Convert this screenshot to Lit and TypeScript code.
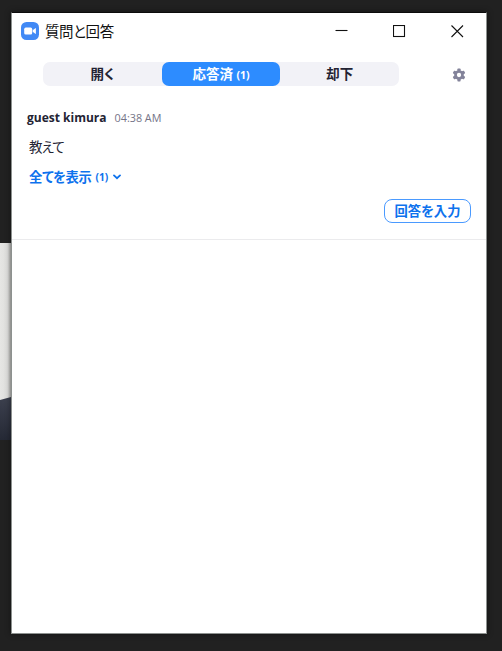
import { LitElement, html, svg, css, type TemplateResult } from 'lit';
import { customElement, property, state } from 'lit/decorators.js';

interface Tab {
  label: string;
  count?: number;
}

interface Question {
  author: string;
  time: string;
  text: string;
  answers: number;
}

const TABS: Tab[] = [
  { label: '開く' },
  { label: '応答済', count: 1 },
  { label: '却下' },
];

const QUESTIONS: Question[] = [
  { author: 'guest kimura', time: '04:38 AM', text: '教えて', answers: 1 },
];

@customElement('qa-titlebar')
export class QaTitlebar extends LitElement {
  @property({ type: String }) label = '';

  static styles = css`
    :host {
      display: flex;
      align-items: center;
      height: 36px;
      padding: 0 22px 0 9px;
    }

    .logo {
      width: 18px;
      height: 18px;
      margin-right: 6px;
    }

    .title {
      flex: 1;
      padding-top: 1px;
      color: #111;
      font-size: 14.5px;
      line-height: 20px;
      letter-spacing: -0.4px;
    }

    .controls {
      display: flex;
      gap: 45px;
    }

    svg {
      display: block;
    }
  `;

  render(): TemplateResult {
    return html`
      <svg class="logo" viewBox="0 0 18 18">
        <rect width="18" height="18" rx="5.5" fill="#4189f5" />
        <rect x="3.2" y="5.6" width="8" height="7" rx="1.6" fill="#fff" />
        <path d="M11.7 8.2l2.6-2q.6-.3.6.4v4.8q0 .7-.6.4l-2.6-2z" fill="#fff" />
      </svg>
      <span class="title">${this.label}</span>
      <div class="controls">
        ${this._renderControl(svg`<path d="M.5 5.5h12" />`)}
        ${this._renderControl(svg`<rect x=".5" y=".5" width="11" height="11" />`)}
        ${this._renderControl(svg`<path d="M.5.5l11.5 11.5M12 .5l-11.5 11.5" />`)}
      </div>
    `;
  }

  private _renderControl(shape: unknown): TemplateResult {
    return html`
      <svg width="13" height="13" viewBox="0 0 13 13" fill="none" stroke="#111" stroke-width="1.1">
        ${shape}
      </svg>
    `;
  }
}

@customElement('qa-tabs')
export class QaTabs extends LitElement {
  @property({ attribute: false }) tabs: Tab[] = [];
  @property({ type: Number }) selected = 0;

  static styles = css`
    :host {
      display: flex;
      width: 356px;
      height: 24px;
      border-radius: 7px;
      background: #f2f2f7;
    }

    button {
      flex: 1;
      padding: 0;
      border: none;
      border-radius: 7px;
      background: transparent;
      color: #232333;
      font: inherit;
      font-size: 13.5px;
      font-weight: 700;
      line-height: 22px;
      font-feature-settings: inherit;
    }

    button.active {
      background: #2d8cff;
      color: #fff;
    }

    small {
      font-size: 10.5px;
    }
  `;

  render(): TemplateResult {
    return html`
      ${this.tabs.map(
        (tab, i) => html`
          <button
            class=${i === this.selected ? 'active' : ''}
            @click=${() => this._select(i)}
          >${tab.label}${tab.count ? html` <small>(${tab.count})</small>` : ''}</button>
        `
      )}
    `;
  }

  private _select(index: number): void {
    this.dispatchEvent(new CustomEvent('select-tab', { detail: index }));
  }
}

@customElement('qa-question')
export class QaQuestion extends LitElement {
  @property({ attribute: false }) question!: Question;

  static styles = css`
    :host {
      display: flex;
      flex-direction: column;
      padding: 10px 15px 0;
      border-bottom: 1px solid #ebebed;
    }

    .meta {
      display: flex;
      align-items: center;
      gap: 8px;
      height: 20px;
      font-size: 12px;
      color: #232333;
    }

    .time {
      color: #747487;
      font-size: 10.8px;
    }

    .text {
      height: 20px;
      margin: 10px 0 0 2px;
      color: #232333;
      font-size: 13.5px;
      line-height: 20px;
      letter-spacing: -0.9px;
    }

    .more {
      display: flex;
      align-items: center;
      height: 20px;
      margin: 9px 0 0 2px;
      color: #0e72ed;
      font-size: 13.3px;
      font-weight: 700;
    }

    .more span {
      letter-spacing: -0.3px;
    }

    .more small {
      margin: 1px 5px 0 4px;
      font-size: 10.2px;
    }

    .more svg {
      margin-top: 2px;
    }

    .reply {
      align-self: flex-end;
      width: 87px;
      height: 24px;
      margin-top: 13px;
      padding: 0;
      border: 1px solid #4a9aff;
      border-radius: 8px;
      background: #fff;
      color: #0e72ed;
      font: inherit;
      font-size: 13.3px;
      font-weight: 700;
      line-height: 20px;
      font-feature-settings: inherit;
    }
  `;

  render(): TemplateResult {
    const { author, time, text, answers } = this.question;
    return html`
      <div class="meta"><b>${author}</b><span class="time">${time}</span></div>
      <div class="text">${text}</div>
      <div class="more">
        <span>全てを表示</span>
        <small>(${answers})</small>
        <svg width="8" height="6" viewBox="0 0 8 6" fill="none" stroke="currentColor" stroke-width="1.8">
          <path d="M1 1.4L4 4.2l3-2.8" stroke-linecap="round" />
        </svg>
      </div>
      <button class="reply">回答を入力</button>
    `;
  }
}

@customElement('app-root')
export class AppRoot extends LitElement {
  @state() private _tab = 1;

  static styles = css`
    :host {
      display: grid;
      grid-template-columns: 11px 476px 1fr;
      box-sizing: border-box;
      height: 651px;
      padding: 12px 0 17px;
      overflow: hidden;
      background: #212121;
      font-family: 'Open Sans', 'Noto Sans', 'Noto Sans CJK JP', sans-serif;
      font-feature-settings: 'palt';
    }

    /* Slice of the meeting video showing behind the window */
    .behind {
      display: block;
      width: 11px;
      height: 197px;
      margin-top: 231px;
    }

    .window {
      box-sizing: border-box;
      height: 622px;
      border: 1px solid #8d918f;
      border-top-color: #0c0c0c;
      background: #fff;
      box-shadow: 0 0 6px rgba(0, 0, 0, 0.45);
    }

    .toolbar {
      display: flex;
      align-items: center;
      justify-content: space-between;
      height: 24px;
      padding: 13px 20px 11px 31px;
    }

    .gear {
      margin-top: 2px;
    }

    qa-question {
      box-sizing: border-box;
      height: 143px;
    }
  `;

  render(): TemplateResult {
    return html`
      <svg class="behind" viewBox="0 0 11 197">
        <defs>
          <linearGradient id="wall">
            <stop offset="0" stop-color="#e6e6e4" />
            <stop offset=".7" stop-color="#dededc" />
            <stop offset="1" stop-color="#b5b5b3" />
          </linearGradient>
          <linearGradient id="coat" x2="0" y2="1">
            <stop offset="0" stop-color="#3c404e" />
            <stop offset="1" stop-color="#252935" />
          </linearGradient>
        </defs>
        <rect width="11" height="160" fill="url(#wall)" />
        <path d="M0 157l11-3v43H0z" fill="url(#coat)" />
      </svg>
      <div class="window">
        <qa-titlebar label="質問と回答"></qa-titlebar>
        <div class="toolbar">
          <qa-tabs
            .tabs=${TABS}
            .selected=${this._tab}
            @select-tab=${(e: CustomEvent<number>) => (this._tab = e.detail)}
          ></qa-tabs>
          ${this._renderGear()}
        </div>
        ${QUESTIONS.map((q) => html`<qa-question .question=${q}></qa-question>`)}
      </div>
    `;
  }

  private _renderGear(): TemplateResult {
    return html`
      <svg class="gear" width="14" height="14" viewBox="-7 -7 14 14">
        <circle r="3.5" fill="none" stroke="#83839a" stroke-width="2.7" />
        ${[0, 60, 120, 180, 240, 300].map(
          (angle) => svg`
            <rect x="-1.6" y="-6.4" width="3.2" height="2.6" rx=".7"
              fill="#83839a" transform="rotate(${angle})" />
          `
        )}
      </svg>
    `;
  }
}

declare global {
  interface HTMLElementTagNameMap {
    'app-root': AppRoot;
    'qa-titlebar': QaTitlebar;
    'qa-tabs': QaTabs;
    'qa-question': QaQuestion;
  }
}
